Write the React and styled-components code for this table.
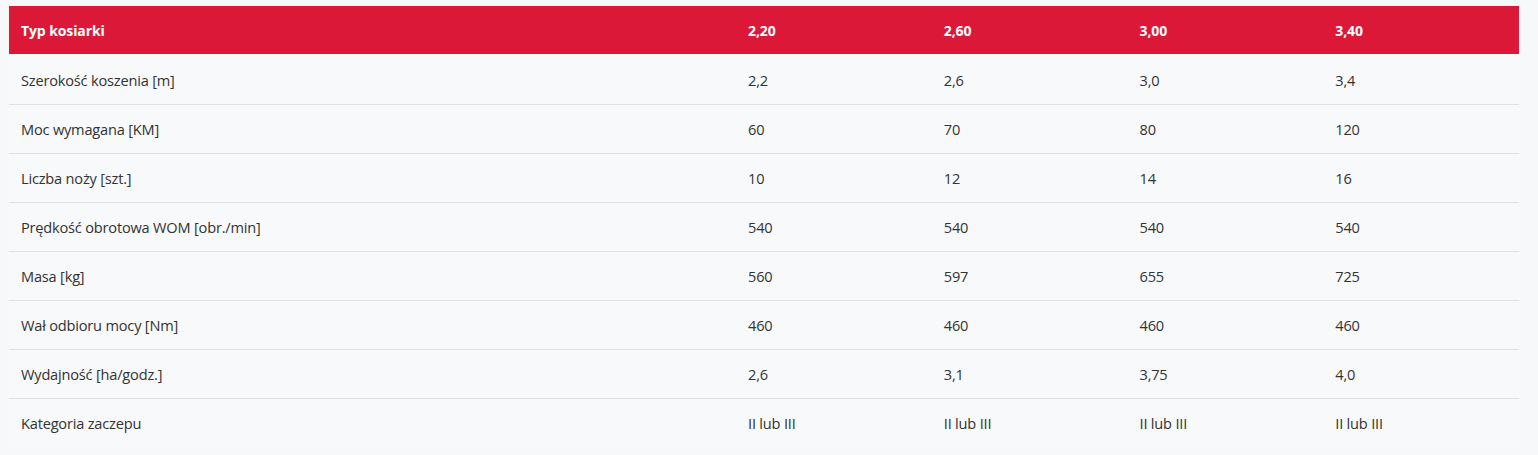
import React from "react";
import styled, { createGlobalStyle } from "styled-components";

const Global = createGlobalStyle`
  html, body { margin: 0; padding: 0; background: #f7f8fa; }
  body { font-family: "Open Sans", "Noto Sans", sans-serif; color: #333; }
`;

const Page = styled.div`
  padding: 6px 19px 0 9px;
  height: 455px;
  box-sizing: border-box;
  overflow: hidden;
`;

const Table = styled.div`
  display: grid;
  grid-template-columns: 727px repeat(4, 1fr);
`;

const Row = styled.div`
  display: contents;
`;

const HeadCell = styled.div`
  height: 50px;
  box-sizing: border-box;
  display: flex;
  align-items: center;
  padding: 0 12px;
  font-size: 14px;
  letter-spacing: -0.1px;
  font-weight: 700;
  color: #fff;
  background: #dc1839;
  background-clip: padding-box;
  border-bottom: 2px solid #f8f9fb;
`;

const Cell = styled.div`
  height: 49px;
  box-sizing: border-box;
  display: flex;
  align-items: center;
  padding: 0 12px 1px;
  font-size: 14.6px;
  letter-spacing: -0.2px;
  background: #f8f9fb;
  color: #333;
  border-bottom: ${(p) => (p.$last ? "none" : "1px solid #dfe1e6")};
`;

const head = ["Typ kosiarki", "2,20", "2,60", "3,00", "3,40"];
const rows = [
  ["Szerokość koszenia [m]", "2,2", "2,6", "3,0", "3,4"],
  ["Moc wymagana [KM]", "60", "70", "80", "120"],
  ["Liczba noży [szt.]", "10", "12", "14", "16"],
  ["Prędkość obrotowa WOM [obr./min]", "540", "540", "540", "540"],
  ["Masa [kg]", "560", "597", "655", "725"],
  ["Wał odbioru mocy [Nm]", "460", "460", "460", "460"],
  ["Wydajność [ha/godz.]", "2,6", "3,1", "3,75", "4,0"],
  ["Kategoria zaczepu", "II lub III", "II lub III", "II lub III", "II lub III"],
];

export default function App() {
  return (
    <>
      <Global />
      <Page>
        <Table>
          <Row>
            {head.map((h, i) => (
              <HeadCell key={i}>{h}</HeadCell>
            ))}
          </Row>
          {rows.map((r, ri) => (
            <Row key={ri}>
              {r.map((c, ci) => (
                <Cell key={ci} $last={ri === rows.length - 1}>{c}</Cell>
              ))}
            </Row>
          ))}
        </Table>
      </Page>
    </>
  );
}
